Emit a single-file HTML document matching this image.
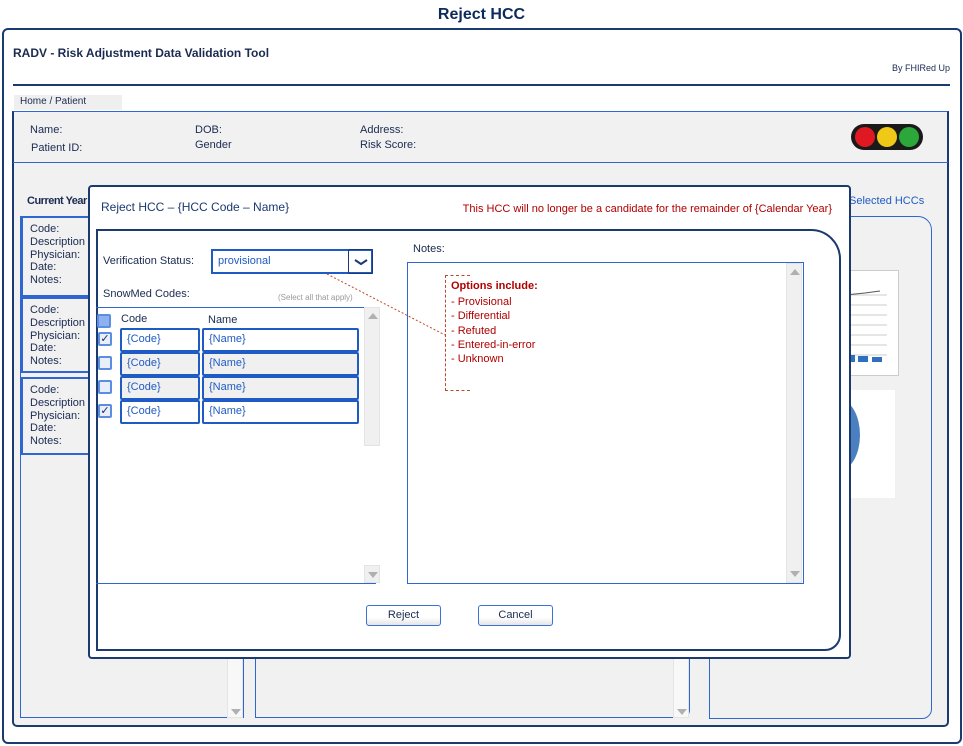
<!DOCTYPE html>
<html><head><meta charset="utf-8"><style>
*{margin:0;padding:0;box-sizing:border-box}
body{width:963px;height:746px;background:#fff;position:relative;overflow:hidden;font-family:"Liberation Sans",sans-serif;color:#1a2a50}
.a{position:absolute}
.t{position:absolute;font-size:11px;white-space:nowrap}
.row{position:absolute;height:24px;border:2px solid #1f5bc4;border-radius:2px;font-size:11px;color:#1f5bc4;padding:3px 0 0 5px}
.cb{position:absolute;width:14px;height:14px;border:2px solid #5b8de0;border-radius:2px;background:#e8eefc;font-size:11px;line-height:10px;text-align:center;color:#1a2a50}
.btn{position:absolute;height:21px;border:1px solid #3a72d8;border-radius:3px;background:linear-gradient(#fff 60%,#e4e4e4);font-size:11px;text-align:center;line-height:19px;color:#1a2a50}
.sb{position:absolute;width:16px;background:#f0f0f0;border:1px solid #e4e4e4}
.up,.dn{position:absolute;left:3px;width:0;height:0;border-left:5px solid transparent;border-right:5px solid transparent}
.up{border-bottom:6px solid #b0b0b0}.dn{border-top:6px solid #b0b0b0}
</style></head><body>
<div class="t" style="left:0;width:963px;text-align:center;top:6px;font-size:16px;font-weight:bold;color:#0d2a5c">Reject HCC</div>
<div class="a" style="left:2px;top:28px;width:960px;height:716px;border:2px solid #1a3a70;border-radius:6px"></div>
<div class="t" style="left:13px;top:46px;font-size:12px;font-weight:bold">RADV - Risk Adjustment Data Validation Tool</div>
<div class="t" style="right:13px;top:63px;font-size:9px">By FHIRed Up</div>
<div class="a" style="left:13px;top:84px;width:937px;height:2px;background:#1a3a70"></div>
<div class="a" style="left:14px;top:95px;width:108px;height:15px;background:#efefef"></div>
<div class="t" style="left:20px;top:96px;font-size:10px">Home / Patient</div>
<!-- main gray panel -->
<div class="a" style="left:12px;top:111px;width:937px;height:616px;background:#f1f1f1;border:2px solid #1a3a70;border-top:1px solid #2f66d0;border-radius:0 0 5px 5px"></div>
<div class="a" style="left:13px;top:162px;width:935px;height:1px;background:#2f66d0"></div>
<div class="t" style="left:30px;top:124px">Name:</div>
<div class="t" style="left:31px;top:142px">Patient ID:</div>
<div class="t" style="left:195px;top:124px">DOB:</div>
<div class="t" style="left:195px;top:139px">Gender</div>
<div class="t" style="left:360px;top:124px">Address:</div>
<div class="t" style="left:360px;top:139px">Risk Score:</div>
<div class="a" style="left:851px;top:124px;width:72px;height:26px;border-radius:13px;background:#1a1a1a"></div>
<div class="a" style="left:855px;top:127px;width:20px;height:20px;border-radius:50%;background:#e01822"></div>
<div class="a" style="left:877px;top:127px;width:20px;height:20px;border-radius:50%;background:#f0c818"></div>
<div class="a" style="left:899px;top:127px;width:20px;height:20px;border-radius:50%;background:#2ca83a"></div>
<div class="t" style="left:27px;top:195px;font-weight:bold;letter-spacing:-0.5px">Current Year</div>
<div class="t" style="left:849px;top:195px;color:#1f5bc4">Selected HCCs</div>
<!-- left column -->
<div class="a" style="left:20px;top:216px;width:224px;height:502px;border:1px solid #2f66d0"></div>
<div class="a" style="left:21px;top:216px;width:70px;height:81px;border:2px solid #2f66d0;background:#f1f1f1"></div>
<div class="a" style="left:21px;top:297px;width:70px;height:76px;border:2px solid #2f66d0;background:#f1f1f1"></div>
<div class="a" style="left:21px;top:377px;width:70px;height:78px;border:2px solid #2f66d0;background:#f1f1f1"></div>
<div class="t" style="left:30px;top:223px;line-height:12.8px">Code:<br>Description<br>Physician:<br>Date:<br>Notes:</div>
<div class="t" style="left:30px;top:304px;line-height:12.8px">Code:<br>Description<br>Physician:<br>Date:<br>Notes:</div>
<div class="t" style="left:30px;top:384px;line-height:12.8px">Code:<br>Description<br>Physician:<br>Date:<br>Notes:</div>
<div class="sb" style="left:227px;top:655px;height:63px;background:#f8f8f8"><div class="dn" style="top:53px"></div></div>
<!-- middle column -->
<div class="a" style="left:255px;top:655px;width:435px;height:63px;border:1px solid #2f66d0;border-top:none;border-radius:0 0 8px 0"></div>
<div class="sb" style="left:673px;top:655px;height:63px;background:#f8f8f8"><div class="dn" style="top:53px"></div></div>
<!-- right column -->
<div class="a" style="left:709px;top:216px;width:223px;height:503px;border:1px solid #2f66d0;border-radius:0 14px 10px 0"></div>
<div class="a" style="left:845px;top:270px;width:54px;height:106px;background:#fff;border:1px solid #ccc"></div>
<svg class="a" style="left:845px;top:285px" width="50" height="80"><g stroke="#ccc"><line x1="0" y1="10" x2="42" y2="10"/><line x1="0" y1="20" x2="42" y2="20"/><line x1="0" y1="30" x2="42" y2="30"/><line x1="0" y1="40" x2="42" y2="40"/><line x1="0" y1="50" x2="42" y2="50"/><line x1="0" y1="60" x2="42" y2="60"/><line x1="0" y1="70" x2="42" y2="70"/></g><polyline points="0,10 20,8 35,6" stroke="#555" fill="none"/><rect x="5" y="70" width="5" height="7" fill="#2f6fc0"/><rect x="13" y="71" width="10" height="6" fill="#2f6fc0"/><rect x="27" y="72" width="10" height="5" fill="#2f6fc0"/></svg>
<div class="a" style="left:845px;top:390px;width:50px;height:108px;background:#fff"></div>
<div class="a" style="left:820px;top:400px;width:40px;height:70px;border-radius:50%;background:#4a7fc0"></div>
<!-- modal -->
<div class="a" style="left:88px;top:185px;width:763px;height:474px;background:#fff;border:2px solid #1a3a70;border-radius:4px"></div>
<div class="t" style="left:101px;top:200px;font-size:12px;color:#1a3a70">Reject HCC – {HCC Code – Name}</div>
<div class="t" style="right:131px;top:203px;color:#b00000">This HCC will no longer be a candidate for the remainder of {Calendar Year}</div>
<div class="a" style="left:96px;top:229px;width:745px;height:422px;border:2px solid #1a3a70;border-radius:0 30px 16px 0"></div>
<div class="t" style="left:103px;top:255px">Verification Status:</div>
<div class="a" style="left:211px;top:249px;width:162px;height:25px;border:2px solid #1f5bc4"></div>
<div class="t" style="left:218px;top:255px;color:#1f5bc4">provisional</div>
<div class="a" style="left:348px;top:249px;width:25px;height:25px;border:1px solid #1a3a70;border-radius:2px"></div>
<svg class="a" style="left:354px;top:258px" width="14" height="8"><path d="M1 2 L7 6 L13 2" stroke="#1a3a70" stroke-width="2" fill="none"/></svg>
<svg class="a" style="left:0;top:0" width="963" height="746"><path d="M327 274 L445 335" stroke="#c0482a" stroke-dasharray="2,2" fill="none"/></svg>
<div class="t" style="left:413px;top:243px">Notes:</div>
<div class="a" style="left:407px;top:262px;width:397px;height:322px;border:1px solid #2f66d0"></div>
<div class="sb" style="left:786px;top:263px;height:320px"><div class="up" style="top:5px"></div><div class="dn" style="top:307px"></div></div>
<div class="a" style="left:445px;top:275px;width:25px;height:116px;border:1px dashed #c0482a;border-right:none"></div>
<div class="t" style="left:451px;top:280px;color:#b00000;font-weight:bold">Options include:</div>
<div class="t" style="left:451px;top:295px;color:#b00000;line-height:14.3px">- Provisional<br>- Differential<br>- Refuted<br>- Entered-in-error<br>- Unknown</div>
<div class="t" style="left:103px;top:288px">SnowMed Codes:</div>
<div class="t" style="left:278px;top:293px;font-size:8px;color:#999">(Select all that apply)</div>
<div class="a" style="left:96px;top:307px;width:280px;height:277px;border-top:1px solid #2f66d0;border-bottom:1px solid #2f66d0"></div>
<div class="sb" style="left:364px;top:307px;height:139px"><div class="up" style="top:5px"></div></div>
<div class="sb" style="left:364px;top:565px;height:18px"><div class="dn" style="top:6px"></div></div>
<div class="cb" style="left:97px;top:314px;background:#8fb0f0"></div>
<div class="t" style="left:121px;top:313px">Code</div>
<div class="t" style="left:208px;top:314px">Name</div>
<div class="cb" style="left:98px;top:332px">✓</div>
<div class="cb" style="left:98px;top:356px"></div>
<div class="cb" style="left:98px;top:380px"></div>
<div class="cb" style="left:98px;top:404px">✓</div>
<div class="row" style="left:120px;top:328px;width:80px">{Code}</div>
<div class="row" style="left:202px;top:328px;width:157px">{Name}</div>
<div class="row" style="left:120px;top:352px;width:80px;background:#f0f0f0">{Code}</div>
<div class="row" style="left:202px;top:352px;width:157px;background:#f0f0f0">{Name}</div>
<div class="row" style="left:120px;top:376px;width:80px;background:#f0f0f0">{Code}</div>
<div class="row" style="left:202px;top:376px;width:157px;background:#f0f0f0">{Name}</div>
<div class="row" style="left:120px;top:400px;width:80px">{Code}</div>
<div class="row" style="left:202px;top:400px;width:157px">{Name}</div>
<div class="btn" style="left:366px;top:605px;width:75px">Reject</div>
<div class="btn" style="left:478px;top:605px;width:75px">Cancel</div>
</body></html>
